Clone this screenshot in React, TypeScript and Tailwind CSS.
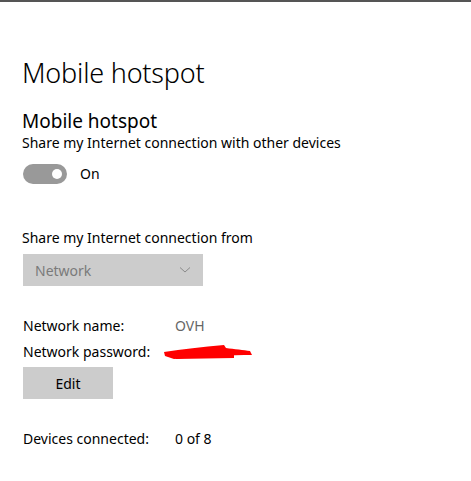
import React from "react";

const FONT = { fontFamily: '"Noto Sans", "Segoe UI", sans-serif' };

function Toggle() {
  return (
    <div className="flex h-[20px] w-[44px] items-center justify-end rounded-full bg-[#999999] pr-[5px]">
      <div className="h-[10px] w-[10px] rounded-full bg-white" />
    </div>
  );
}

function Scribble() {
  return (
    <svg width="92" height="16" viewBox="0 0 92 16">
      <path d="M2 8 C20 5 40 3 62 1 L64 4 C72 5 82 6 88 7 L90 11 C70 11 40 12 12 15 L3 12 Z" fill="#ff0000" />
      <path d="M12 12 L72 10 L72 14 L14 15 Z" fill="#ff0000" />
    </svg>
  );
}

export default function App() {
  return (
    <div className="relative h-[481px] w-[471px] overflow-hidden bg-white text-black" style={FONT}>
      <div className="h-[2px] w-full bg-[#555555]" />
      <div className="pl-[22px]">
        <h1 className="mt-[53px] text-[27px] font-light leading-[36px] tracking-[-0.2px]">Mobile hotspot</h1>
        <h2 className="mt-[18px] text-[19px] leading-[24px]">Mobile hotspot</h2>
        <p className="text-[14px] leading-[20px]">Share my Internet connection with other devices</p>
        <div className="mt-[10px] flex items-center gap-[13px] pl-[1px]">
          <Toggle />
          <span className="text-[14px]">On</span>
        </div>

        <p className="mt-[44px] text-[14px] leading-[20px]">Share my Internet connection from</p>
        <div className="ml-[1px] mt-[6px] flex h-[32px] w-[180px] items-center justify-between bg-[#cccccc] pl-[12px] pr-[12px] text-[14px] text-[#7a7a7a]">
          <span>Network</span>
          <svg width="12" height="8" viewBox="0 0 12 8">
            <path d="M1 1.5 L6 6 L11 1.5" fill="none" stroke="#8a8a8a" strokeWidth="1" />
          </svg>
        </div>

        <div className="mt-[30px] flex text-[14px] leading-[20px]">
          <span className="w-[153px] pl-[1px]">Network name:</span>
          <span className="text-[#666666]">OVH</span>
        </div>
        <div className="mt-[6px] flex items-center text-[14px] leading-[20px]">
          <span className="w-[140px] pl-[1px]">Network password:</span>
          <Scribble />
        </div>
        <button className="ml-[1px] mt-[5px] h-[32px] w-[90px] bg-[#cccccc] text-[14px]">Edit</button>

        <div className="mt-[30px] flex text-[14px] leading-[20px]">
          <span className="w-[153px] pl-[1px]">Devices connected:</span>
          <span>0 of 8</span>
        </div>
      </div>
      <div className="ml-[233px] mt-[32px] h-[2px] w-[2px] bg-[#ff0000]" />
    </div>
  );
}
